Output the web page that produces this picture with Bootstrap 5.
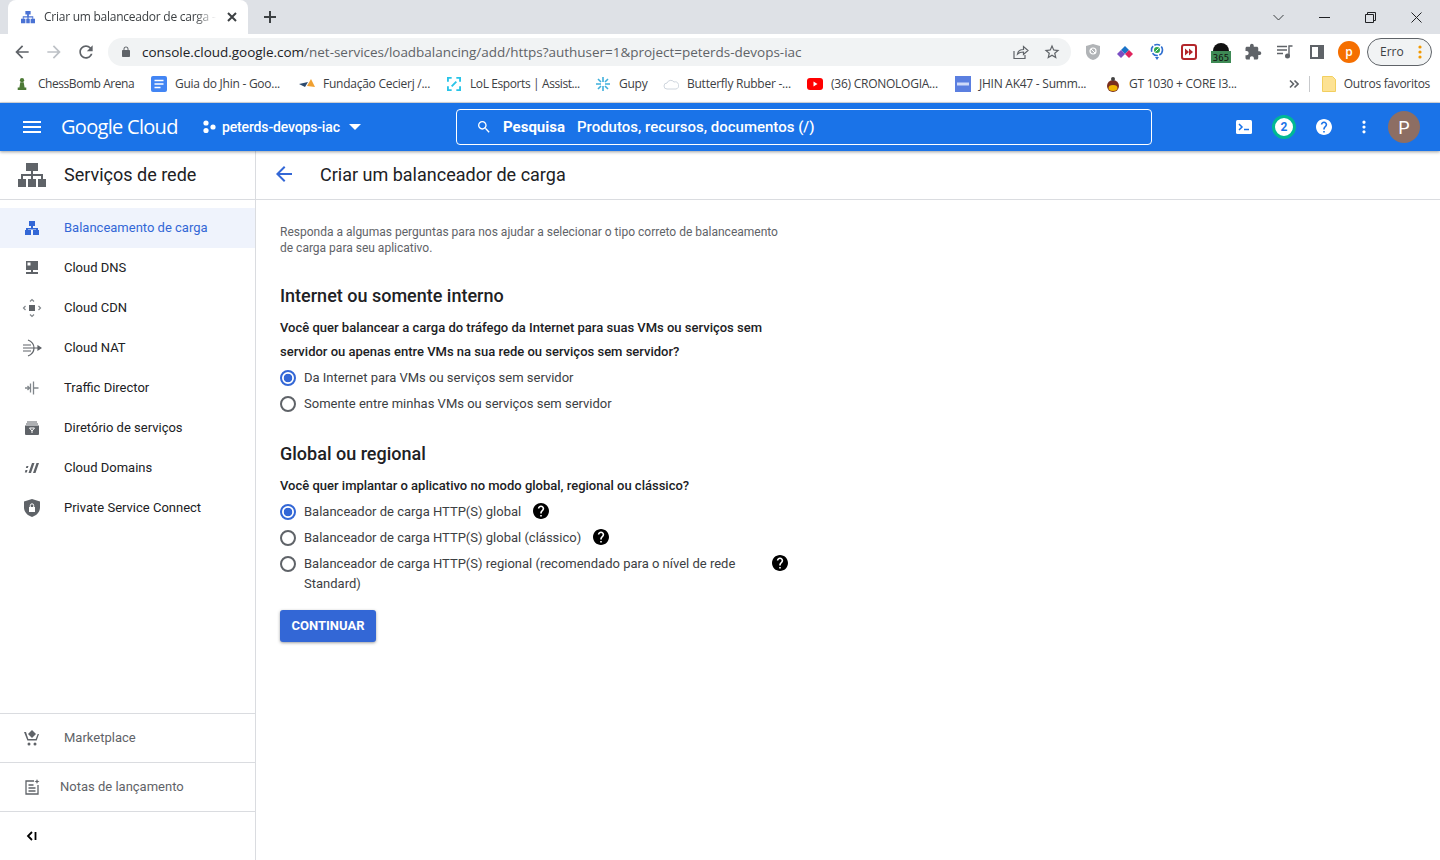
<!DOCTYPE html>
<html lang="pt-BR">
<head>
    <meta charset="UTF-8">
    <meta name="viewport" content="width=device-width, initial-scale=1.0">
    <title>Criar um balanceador de carga</title>
    <link href="https://cdn.jsdelivr.net/npm/bootstrap@5.3.0/dist/css/bootstrap.min.css" rel="stylesheet">
    <style>
        html, body { height: 100%; }
        body { overflow: hidden; font-family: Roboto, sans-serif; color: #202124; background: #fff; display: flex; flex-direction: column; }

        /* Browser chrome */
        .chrome-text { font-family: "Open Sans", sans-serif; }
        .tabstrip { height: 34px; background: #dee1e6; padding-left: 8px; flex: none; }
        .tab-item { width: 240px; height: 34px; background: #fff; border-radius: 8px 8px 0 0; padding: 0 10px 0 13px; font-size: 12px; color: #3c4043; }
        .tab-title { width: 172px; margin-left: 9px; white-space: nowrap; letter-spacing: -.25px; -webkit-mask-image: linear-gradient(to right, #000 88%, transparent); mask-image: linear-gradient(to right, #000 88%, transparent); }
        .new-tab { margin-left: 14px; }
        .win-btns { margin-left: auto; padding-right: 18px; gap: 35px; }
        .toolbar { height: 34px; padding: 4px 8px 0 12px; flex: none; }
        .nav-btns { gap: 12px; width: 96px; flex: none; }
        .omnibox { width: 963px; height: 28px; background: #f1f3f4; border-radius: 14px; padding: 0 10px 0 12px; font-size: 13.5px; color: #5f6368; flex: none; }
        .omnibox b { font-weight: 400; color: #202124; }
        .url-text { margin-left: 10px; white-space: nowrap; letter-spacing: -.02px; }
        .omni-right { margin-left: auto; gap: 14px; }
        .ext-row { width: 280px; margin-left: 10px; padding-left: 2px; gap: 12px; flex: none; }
        .ext-row > * { flex: none; }
        .ext-slot { width: 20px; height: 20px; display: flex; align-items: center; justify-content: center; }
        .profile-dot { width: 22px; height: 22px; margin-left: -1px; border-radius: 50%; background: #f56f00; color: #fff; font-size: 12px; font-weight: 600; }
        .erro-pill { width: 65px; height: 28px; margin-left: -5px; border: 1px solid #5f6368; border-radius: 14px; background: #f1f3f4; font-size: 12px; padding: 0 9px 0 12px; color: #3c4043; }
        .bookmarks { height: 35px; padding: 0 0 2px 16px; font-size: 12px; letter-spacing: -.25px; color: #3c4043; border-bottom: 1px solid #dadce0; flex: none; display: grid; grid-template-columns: 135px 148px 148px 148px 68px 144px 148px 150px 146px 1fr; align-items: center; }
        .bm-item { display: flex; align-items: center; gap: 8px; white-space: nowrap; overflow: hidden; }
        .bm-item svg { flex: none; }
        .bm-chess { gap: 10px; letter-spacing: -.45px; }
        .bm-lol { gap: 9px; letter-spacing: -.4px; }
        .bm-end { display: flex; align-items: center; justify-content: flex-end; padding-right: 10px; white-space: nowrap; letter-spacing: -.3px; }
        .bm-sep { width: 1px; height: 16px; background: #c7c9cc; margin: 0 12px 0 10px; }

        /* Cloud console top bar */
        .gc-bar { height: 48px; background: #1a73e8; color: #fff; padding-left: 20px; flex: none; position: relative; z-index: 2; box-shadow: 0 1px 3px rgba(60,64,67,.5); }
        .gc-logo { font-family: "Open Sans", sans-serif; font-size: 20px; letter-spacing: -.7px; margin-left: 17px; width: 141px; flex: none; }
        .gc-project { font-size: 14px; font-weight: 500; letter-spacing: -.15px; width: 254px; flex: none; gap: 6px; }
        .gc-project .caret-ico { margin-left: 3px; }
        .gc-search { width: 696px; height: 36px; border: 1px solid #fff; border-radius: 4px; padding-left: 19px; font-size: 15px; font-weight: 500; flex: none; }
        .gc-search strong { font-weight: 700; margin: 0 12px 0 11px; }
        .gc-actions { margin-left: 84px; gap: 24px; }
        .notif-ring { width: 24px; height: 24px; border-radius: 50%; background: #fff; border: 3px solid #00b894; color: #1a73e8; font-size: 12px; font-weight: 700; margin: 0 -4px; }
        .user-dot { width: 32px; height: 32px; border-radius: 50%; background: #8d6e63; font-size: 18px; margin-left: -8px; }

        /* Page */
        .page-body { flex: 1; min-height: 0; }
        .side-col { width: 256px; flex: none; border-right: 1px solid #dadce0; }
        .side-head { height: 49px; padding: 0 0 1px 18px; font-size: 18px; border-bottom: 1px solid #dadce0; flex: none; }
        .side-head span { margin-left: 18px; }
        .side-list { padding-top: 8px; flex: 1; }
        .side-link { height: 40px; padding-left: 24px; font-size: 13px; color: #202124; text-decoration: none; }
        .side-link span { margin-left: 24px; }
        .side-link .wide-ico { margin: 0 -2px; }
        .side-link.is-current { background: #eff3fc; color: #3367d6; }
        .side-foot { height: 49px; padding-left: 24px; border-top: 1px solid #dadce0; font-size: 13px; color: #5f6368; flex: none; }
        .side-foot .foot-market { margin-left: 24px; }
        .side-foot .foot-notes { margin-left: 20px; }
        .main-col { flex: 1; min-width: 0; }
        .main-head { height: 49px; padding: 0 0 2px 20px; border-bottom: 1px solid #dadce0; font-size: 18px; }
        .main-head span { margin-left: 28px; }
        .main-form { width: 510px; margin-left: 24px; padding-top: 24px; }
        .intro-text { font-size: 12px; line-height: 16px; color: #5f6368; margin: 0; }
        .sect-title { font-size: 18px; line-height: 24px; font-weight: 500; margin: 0; }
        .sect-one { margin-top: 28px; }
        .sect-two { margin-top: 25px; }
        .ask-text { font-size: 13px; line-height: 24px; font-weight: 500; margin: 8px 0 1px; }
        .radio-row { min-height: 26px; padding: 3px 0 3px; margin: 0; font-size: 13px; line-height: 20px; display: flex; align-items: flex-start; color: #3c4043; }
        .radio-row .form-check-input { width: 16px; height: 16px; margin: 2px 8px 0 0; float: none; flex: none; border: 2px solid #5f6368; background-color: #fff; background-image: none; box-shadow: none; }
        .radio-row .form-check-input:checked { border-color: #3367d6; background-color: #fff; background-image: radial-gradient(circle, #3367d6 0 4px, transparent 4.6px); }
        .radio-row .form-check-label { opacity: 1; }
        .help-mark { margin-left: 12px; margin-top: 1px; flex: none; }
        .help-wide { margin-left: 0; }
        .label-wide { width: 468px; flex: none; }
        .go-btn { background: #3367d6; color: #fff; border: 0; border-radius: 3px; height: 32px; width: 96px; padding: 0; margin-top: 13px; font-size: 13px; font-weight: 700; box-shadow: 0 1px 3px rgba(60,64,67,.5); }
        .go-btn:hover { background: #2b5cc4; color: #fff; }
    </style>
</head>
<body>
    <div class="tabstrip d-flex align-items-end chrome-text">
        <div class="tab-item d-flex align-items-center">
            <svg width="14" height="14" viewBox="0 0 16 16" fill="#4a72d4"><path d="M5 1h6v4H9v2h5v3h2v5h-5v-5h2V8.500H8.700V10H10v5H6v-5h1.300V8.500H3V10h2v5H0v-5h2V7h5V5H5z"/></svg>
            <div class="tab-title">Criar um balanceador de carga –</div>
            <svg width="12" height="12" viewBox="0 0 12 12" stroke="#3c4043" stroke-width="2" class="ms-auto"><path d="M2 2l8 8M10 2l-8 8"/></svg>
        </div>
        <svg class="new-tab align-self-center" width="16" height="16" viewBox="0 0 16 16" stroke="#3c4043" stroke-width="2"><path d="M8 2v12M2 8h12"/></svg>
        <div class="win-btns d-flex align-items-center align-self-center">
            <svg width="11" height="11" viewBox="0 0 11 11" fill="none" stroke="#3c4043"><path d="M.5 3l5 5 5-5"/></svg>
            <svg width="11" height="11" viewBox="0 0 11 11" stroke="#202124"><path d="M0 5.500h11"/></svg>
            <svg width="11" height="11" viewBox="0 0 11 11" fill="none" stroke="#202124"><path d="M.5 2.500h8v8h-8zM2.500 2.500v-2h8v8h-2"/></svg>
            <svg width="11" height="11" viewBox="0 0 11 11" stroke="#202124"><path d="M.5.5l10 10M10.500.5l-10 10"/></svg>
        </div>
    </div>

    <div class="toolbar d-flex align-items-start chrome-text">
        <div class="nav-btns d-flex align-items-center mt-1">
            <svg width="20" height="20" viewBox="0 0 24 24" fill="#5f6368"><path d="M20 11H7.830l5.590-5.590L12 4l-8 8 8 8 1.410-1.410L7.830 13H20v-2z"/></svg>
            <svg width="20" height="20" viewBox="0 0 24 24" fill="#bdc1c6"><path d="M12 4l-1.410 1.410L16.170 11H4v2h12.170l-5.580 5.590L12 20l8-8z"/></svg>
            <svg width="20" height="20" viewBox="0 0 24 24" fill="#5f6368"><path d="M17.650 6.350C16.200 4.900 14.210 4 12 4c-4.420 0-7.990 3.580-7.990 8s3.570 8 7.990 8c3.730 0 6.840-2.550 7.730-6h-2.080c-.82 2.330-3.040 4-5.650 4-3.310 0-6-2.690-6-6s2.690-6 6-6c1.660 0 3.140.69 4.220 1.780L13 11h7V4l-2.350 2.350z"/></svg>
        </div>
        <div class="omnibox d-flex align-items-center">
            <svg width="12" height="12" viewBox="0 0 24 24" fill="#5f6368"><path d="M18 8h-1V6c0-2.760-2.240-5-5-5S7 3.240 7 6v2H6c-1.100 0-2 .9-2 2v10c0 1.100.9 2 2 2h12c1.100 0 2-.9 2-2V10c0-1.100-.9-2-2-2zM8.900 8V6c0-1.710 1.390-3.100 3.100-3.100 1.710 0 3.100 1.390 3.100 3.100v2z"/></svg>
            <div class="url-text"><b>console.cloud.google.com</b>/net-services/loadbalancing/add/https?authuser=1&amp;project=peterds-devops-iac</div>
            <div class="omni-right d-flex align-items-center">
                <svg width="18" height="18" viewBox="0 0 18 18" fill="none" stroke="#5f6368" stroke-width="1.200"><path d="M3 8v7.500h11V12M6.500 11c.5-3 3-4.500 6-4.500V3.500L17 7.500l-4.500 4V9c-2.500 0-4.500.5-6 2z"/></svg>
                <svg width="18" height="18" viewBox="0 0 24 24" fill="#5f6368"><path d="M22 9.240l-7.190-.62L12 2 9.190 8.630 2 9.240l5.460 4.730L5.820 21 12 17.270 18.180 21l-1.630-7.030L22 9.240zM12 15.400l-3.760 2.270 1-4.280-3.320-2.880 4.380-.38L12 6.100l1.710 4.040 4.380.38-3.320 2.880 1 4.280L12 15.400z"/></svg>
            </div>
        </div>
        <div class="ext-row d-flex align-items-center mt-0">
            <span class="ext-slot"><svg width="16" height="18" viewBox="0 0 16 18"><path d="M8 1l7 2v6c0 4-3 7-7 8-4-1-7-4-7-8V3z" fill="#b1b4b7"/><circle cx="8" cy="8" r="3" fill="none" stroke="#fff" stroke-width="1.200"/><path d="M6 6l4 4" stroke="#fff"/></svg></span>
            <span class="ext-slot"><svg width="16" height="12" viewBox="0 0 16 12"><path d="M8 0l4 4-4 4-4-4z" fill="#1a73c8"/><path d="M4 4l4 4-4 4-4-4z" fill="#7b4fc4"/><path d="M12 4l4 4-4 4-4-4z" fill="#e0245e"/></svg></span>
            <span class="ext-slot"><svg width="16" height="18" viewBox="0 0 16 18"><circle cx="8" cy="7" r="5.500" fill="none" stroke="#2f6fd0" stroke-width="1.600" stroke-dasharray="6 1.500"/><circle cx="8" cy="7" r="3" fill="#2fa84f"/><path d="M6.500 8.500l3-3" stroke="#fff"/><path d="M6 14l2 3 2-3z" fill="#2f6fd0"/></svg></span>
            <span class="ext-slot"><svg width="16" height="16" viewBox="0 0 16 16"><rect x="1" y="1" width="14" height="14" rx="2" fill="#fff" stroke="#b3262b" stroke-width="2"/><path d="M4 4.500l4 3.500-4 3.500zM8 4.500l4 3.500-4 3.500z" fill="#b3262b"/></svg></span>
            <span class="ext-slot"><svg width="20" height="22" viewBox="0 0 20 22"><path d="M2 10a8 8 0 0 1 16 0z" fill="#111"/><rect y="10" width="20" height="12" fill="#3e8a55"/><text x="10" y="19.500" font-size="9" text-anchor="middle" fill="#111" font-family="DejaVu Sans Mono, monospace">365</text></svg></span>
            <span class="ext-slot"><svg width="18" height="18" viewBox="0 0 24 24" fill="#5f6368"><path d="M20.500 11H19V7c0-1.100-.9-2-2-2h-4V3.500C13 2.120 11.880 1 10.500 1S8 2.120 8 3.500V5H4c-1.100 0-1.990.9-1.990 2v3.800H3.500c1.490 0 2.700 1.210 2.700 2.700s-1.210 2.700-2.700 2.700H2V20c0 1.100.9 2 2 2h3.800v-1.500c0-1.490 1.210-2.700 2.700-2.700 1.490 0 2.700 1.210 2.700 2.700V22H17c1.100 0 2-.9 2-2v-4h1.500c1.380 0 2.500-1.120 2.500-2.500S21.880 11 20.500 11z"/></svg></span>
            <span class="ext-slot"><svg width="16" height="14" viewBox="0 0 16 14" fill="none" stroke="#5f6368" stroke-width="1.400"><path d="M0 1.500h10M0 5h10M0 8.500h6M12 11V1h3.500"/><circle cx="10.500" cy="11" r="1.800" fill="#5f6368"/></svg></span>
            <span class="ext-slot"><svg width="14" height="14" viewBox="0 0 14 14"><rect x="1" y="1" width="12" height="12" fill="none" stroke="#5f6368" stroke-width="2"/><rect x="8" y="1" width="5" height="12" fill="#5f6368"/></svg></span>
            <span class="profile-dot d-flex align-items-center justify-content-center">p</span>
            <span class="erro-pill d-flex align-items-center justify-content-between">Erro <svg width="4" height="14" viewBox="0 0 4 14" fill="#f29900"><circle cx="2" cy="2" r="1.600"/><circle cx="2" cy="7" r="1.600"/><circle cx="2" cy="12" r="1.600"/></svg></span>
        </div>
    </div>

    <div class="bookmarks chrome-text">
        <div class="bm-item bm-chess"><svg width="12" height="16" viewBox="0 0 14 16" fill="#4d7a36"><circle cx="7" cy="3.500" r="2.500"/><path d="M5 6h4l1 6h2v3H2v-3h2z"/></svg><span>ChessBomb Arena</span></div>
        <div class="bm-item"><svg width="16" height="16" viewBox="0 0 16 16"><rect x="0" width="16" height="16" rx="2" fill="#4285f4"/><path d="M3.500 4.500h9M3.500 8h9M3.500 11.500h6" stroke="#fff" stroke-width="1.400"/></svg>Guia do Jhin - Goo...</div>
        <div class="bm-item"><svg width="16" height="14" viewBox="0 0 16 14"><path d="M0 7l9-2-3 5z" fill="#2c4a6e"/><path d="M8 9l4-7 4 8z" fill="#f0a030"/></svg>Fundação Cecierj /...</div>
        <div class="bm-item bm-lol"><svg width="14" height="14" viewBox="0 0 15 15" fill="none" stroke="#29c4e8" stroke-width="2"><path d="M1 5V1h4M10 1h4v4M14 10v4h-4M5 14H1v-4M5 10l5-5"/></svg><span>LoL Esports | Assist...</span></div>
        <div class="bm-item"><svg width="16" height="16" viewBox="0 0 16 16" stroke="#3fb0dc" stroke-width="1.600"><path d="M8 1v5M8 10v5M1 8h5M10 8h5M3 3l3 3M10 10l3 3M13 3l-3 3M6 10l-3 3"/></svg>Gupy</div>
        <div class="bm-item"><svg width="16" height="12" viewBox="0 0 16 12" fill="none" stroke="#cfd6de"><path d="M4 11a3 3 0 0 1 0-6 4 4 0 0 1 7-1 3.500 3.500 0 0 1 2 7z"/></svg>Butterfly Rubber -...</div>
        <div class="bm-item"><svg width="16" height="12" viewBox="0 0 16 12"><rect width="16" height="12" rx="3" fill="#f00"/><path d="M6.500 3.500l4 2.500-4 2.500z" fill="#fff"/></svg>(36) CRONOLOGIA...</div>
        <div class="bm-item"><svg width="16" height="16" viewBox="0 0 16 16"><rect width="16" height="16" fill="#5b7fe0"/><rect x="2" y="6.500" width="12" height="3" fill="#cfdaf8"/></svg>JHIN AK47 - Summ...</div>
        <div class="bm-item"><svg width="16" height="16" viewBox="0 0 16 16"><circle cx="8" cy="10" r="6" fill="#7a2e1e"/><ellipse cx="8" cy="12" rx="4.500" ry="3" fill="#f0b400"/><circle cx="8" cy="3" r="2" fill="#444"/></svg>GT 1030 + CORE I3...</div>
        <div class="bm-end">
            <svg width="10" height="10" viewBox="0 0 10 10" fill="none" stroke="#5f6368" stroke-width="1.600"><path d="M1 1.500l3.500 3.500L1 8.500M5.500 1.500L9 5 5.500 8.500"/></svg>
            <span class="bm-sep"></span>
            <svg class="me-2" width="14" height="16" viewBox="0 0 14 16"><path d="M.5.500h10l3 3v12H.5z" fill="#fde293" stroke="#f2cf5f"/></svg>
            Outros favoritos
        </div>
    </div>

    <header class="gc-bar d-flex align-items-center">
        <svg width="24" height="24" viewBox="0 0 24 24" fill="#fff"><path d="M3 18h18v-2H3v2zm0-5h18v-2H3v2zm0-7v2h18V6H3z"/></svg>
        <div class="gc-logo">Google Cloud</div>
        <div class="gc-project d-flex align-items-center">
            <svg width="14" height="14" viewBox="0 0 14 14" fill="#fff"><circle cx="4" cy="3" r="2.600"/><circle cx="4" cy="10.500" r="2.600"/><circle cx="11" cy="7" r="2.600"/></svg>
            peterds-devops-iac
            <svg class="caret-ico" width="12" height="6" viewBox="0 0 12 6" fill="#fff"><path d="M0 0h12L6 6z"/></svg>
        </div>
        <div class="gc-search d-flex align-items-center">
            <svg width="16" height="16" viewBox="0 0 24 24" fill="#fff"><path d="M15.500 14h-.79l-.28-.27C15.410 12.590 16 11.110 16 9.500 16 5.910 13.090 3 9.500 3S3 5.910 3 9.500 5.910 16 9.500 16c1.610 0 3.090-.59 4.230-1.570l.27.28v.79l5 4.990L20.490 19l-4.990-5zm-6 0C7.010 14 5 11.990 5 9.500S7.010 5 9.500 5 14 7.010 14 9.500 11.990 14 9.500 14z"/></svg>
            <strong>Pesquisa</strong>Produtos, recursos, documentos (/)
        </div>
        <div class="gc-actions d-flex align-items-center">
            <svg width="16" height="16" viewBox="0 0 16 16"><rect width="16" height="14" y="1" rx="1.500" fill="#fff"/><path d="M3 5l3 3-3 3" fill="none" stroke="#1a73e8" stroke-width="1.500"/><path d="M8 10.500h5" stroke="#1a73e8" stroke-width="1.500"/></svg>
            <div class="notif-ring d-flex align-items-center justify-content-center">2</div>
            <svg width="16" height="16" viewBox="2 2 20 20" fill="#fff"><path d="M12 2C6.480 2 2 6.480 2 12s4.480 10 10 10 10-4.480 10-10S17.520 2 12 2zm1 17h-2v-2h2v2zm2.070-7.750l-.9.92C13.450 12.900 13 13.500 13 15h-2v-.5c0-1.100.45-2.100 1.170-2.830l1.240-1.260c.37-.36.59-.86.59-1.410 0-1.100-.9-2-2-2s-2 .9-2 2H8c0-2.210 1.790-4 4-4s4 1.790 4 4c0 .88-.36 1.680-.93 2.250z"/></svg>
            <svg width="16" height="16" viewBox="4 2 16 20" fill="#fff"><path d="M12 8c1.100 0 2-.9 2-2s-.9-2-2-2-2 .9-2 2 .9 2 2 2zm0 2c-1.100 0-2 .9-2 2s.9 2 2 2 2-.9 2-2-.9-2-2-2zm0 6c-1.100 0-2 .9-2 2s.9 2 2 2 2-.9 2-2-.9-2-2-2z"/></svg>
            <div class="user-dot d-flex align-items-center justify-content-center">P</div>
        </div>
    </header>

    <div class="page-body d-flex">
        <nav class="side-col d-flex flex-column">
            <div class="side-head d-flex align-items-center">
                <svg width="28" height="24" viewBox="0 0 28 24" fill="#5f6368"><path d="M8 0h12v8h-5v3h10v5h3v8h-8v-8h3v-3H15v3h3v8h-8v-8h3v-3H5v3h3v8H0v-8h3v-5h10V8H8z"/></svg>
                <span>Serviços de rede</span>
            </div>
            <div class="side-list">
                <a class="side-link is-current d-flex align-items-center" href="#">
                    <svg width="16" height="16" viewBox="0 0 16 16" fill="#3367d6"><path d="M5 1h6v5H9v2h5v2h1v5H9v-5h3V9.500H4V10h3v5H1v-5h1V8h5V6H5z"/></svg>
                    <span>Balanceamento de carga</span>
                </a>
                <a class="side-link d-flex align-items-center" href="#">
                    <svg width="16" height="16" viewBox="0 0 16 16" fill="#5f6368"><path d="M2 1h12v9H9v2h5v2H2v-2h5v-2H2z"/><rect x="3.500" y="2.500" width="3" height="3" fill="#fff"/></svg>
                    <span>Cloud DNS</span>
                </a>
                <a class="side-link d-flex align-items-center" href="#">
                    <svg class="wide-ico" width="20" height="20" viewBox="0 0 20 20" fill="none" stroke="#80868b" stroke-width="1.200"><rect x="7" y="7" width="6" height="6" fill="#5f6368" stroke="none"/><path d="M8 3.500L10 1.500l2 2M8 16.500l2 2 2-2M3.500 8l-2 2 2 2M16.500 8l2 2-2 2"/></svg>
                    <span>Cloud CDN</span>
                </a>
                <a class="side-link d-flex align-items-center" href="#">
                    <svg class="wide-ico" width="20" height="20" viewBox="0 0 20 20" fill="none" stroke="#5f6368" stroke-width="1.200"><path d="M6 2c5 2 6 5 6 8s-1 6-6 8M1 7h8M1 13h8M1 10h11M12 10h6"/><path d="M16 8l3 2-3 2z" fill="#5f6368"/></svg>
                    <span>Cloud NAT</span>
                </a>
                <a class="side-link d-flex align-items-center" href="#">
                    <svg width="16" height="16" viewBox="0 0 16 16" fill="none" stroke="#80868b" stroke-width="1.300"><path d="M1 8h4M3.500 6l2 2-2 2M6.500 3.500v9M9.500 1.500v13M9.500 8h5"/></svg>
                    <span>Traffic Director</span>
                </a>
                <a class="side-link d-flex align-items-center" href="#">
                    <svg width="16" height="16" viewBox="0 0 16 16"><path d="M3 1.500h10v1H3zM2 3.500h12v1H2z" fill="#5f6368"/><path d="M1 5.500h14V14a1 1 0 0 1-1 1H2a1 1 0 0 1-1-1z" fill="#5f6368"/><path d="M5.500 8h5L8 11zM8 11v2" stroke="#fff" fill="none"/></svg>
                    <span>Diretório de serviços</span>
                </a>
                <a class="side-link d-flex align-items-center" href="#">
                    <svg width="16" height="16" viewBox="0 0 16 16" fill="#5f6368"><path d="M8 3h2.500L7 13H4.500zM12.500 3H15l-3.500 10H9zM2.500 6h2l-.7 2h-2zM1.500 10h2l-.7 2.500h-2z"/></svg>
                    <span>Cloud Domains</span>
                </a>
                <a class="side-link d-flex align-items-center" href="#">
                    <svg width="16" height="18" viewBox="0 0 16 18"><path d="M8 0l8 2.500v6c0 4.500-3.400 8-8 9.500-4.600-1.500-8-5-8-9.500v-6z" fill="#5f6368"/><rect x="5" y="8" width="6" height="5" fill="#fff"/><path d="M6.300 8V6.500a1.700 1.700 0 0 1 3.400 0V8" fill="none" stroke="#fff"/></svg>
                    <span>Private Service Connect</span>
                </a>
            </div>
            <div class="side-foot d-flex align-items-center">
                <svg width="16" height="16" viewBox="0 0 16 16" fill="#5f6368"><path d="M8 0l4 4-4 4-4-4zM0 2h2l2.300 7h7.400l2-5H15l-2.300 6.500H3.400z"/><circle cx="5" cy="14" r="1.500"/><circle cx="11" cy="14" r="1.500"/></svg>
                <span class="foot-market">Marketplace</span>
            </div>
            <div class="side-foot d-flex align-items-center">
                <svg width="16" height="16" viewBox="0 0 16 16" fill="none" stroke="#5f6368" stroke-width="1.300"><path d="M10 2H2v13h12V6M4.500 6h5M4.500 9h7M4.500 12h7"/><path d="M13 0l.7 1.800 1.800.7-1.800.7-.7 1.800-.7-1.800-1.800-.7 1.800-.7z" fill="#5f6368" stroke="none"/></svg>
                <span class="foot-notes">Notas de lançamento</span>
            </div>
            <div class="side-foot d-flex align-items-center">
                <svg width="16" height="16" viewBox="0 0 16 16" fill="none" stroke="#000" stroke-width="1.800"><path d="M8 4L4 8l4 4M11.500 4v8"/></svg>
            </div>
        </nav>

        <main class="main-col">
            <div class="main-head d-flex align-items-center">
                <svg width="16" height="16" viewBox="4 4 16 16" fill="#3367d6"><path d="M20 11H7.830l5.590-5.590L12 4l-8 8 8 8 1.410-1.410L7.830 13H20v-2z"/></svg>
                <span>Criar um balanceador de carga</span>
            </div>
            <form class="main-form">
                <p class="intro-text">Responda a algumas perguntas para nos ajudar a selecionar o tipo correto de balanceamento de carga para seu aplicativo.</p>

                <h2 class="sect-title sect-one">Internet ou somente interno</h2>
                <p class="ask-text">Você quer balancear a carga do tráfego da Internet para suas VMs ou serviços sem servidor ou apenas entre VMs na sua rede ou serviços sem servidor?</p>
                <div class="form-check radio-row">
                    <input class="form-check-input" type="radio" name="origem" id="orig1" checked>
                    <label class="form-check-label" for="orig1">Da Internet para VMs ou serviços sem servidor</label>
                </div>
                <div class="form-check radio-row">
                    <input class="form-check-input" type="radio" name="origem" id="orig2">
                    <label class="form-check-label" for="orig2">Somente entre minhas VMs ou serviços sem servidor</label>
                </div>

                <h2 class="sect-title sect-two">Global ou regional</h2>
                <p class="ask-text">Você quer implantar o aplicativo no modo global, regional ou clássico?</p>
                <div class="form-check radio-row">
                    <input class="form-check-input" type="radio" name="modo" id="modo1" checked>
                    <label class="form-check-label" for="modo1">Balanceador de carga HTTP(S) global</label>
                    <svg class="help-mark" width="16" height="16" viewBox="2 2 20 20"><path d="M12 2C6.480 2 2 6.480 2 12s4.480 10 10 10 10-4.480 10-10S17.520 2 12 2zm1 17h-2v-2h2v2zm2.070-7.750l-.9.92C13.450 12.900 13 13.500 13 15h-2v-.5c0-1.100.45-2.100 1.170-2.830l1.240-1.260c.37-.36.59-.86.59-1.410 0-1.100-.9-2-2-2s-2 .9-2 2H8c0-2.210 1.790-4 4-4s4 1.790 4 4c0 .88-.36 1.680-.93 2.250z"/></svg>
                </div>
                <div class="form-check radio-row">
                    <input class="form-check-input" type="radio" name="modo" id="modo2">
                    <label class="form-check-label" for="modo2">Balanceador de carga HTTP(S) global (clássico)</label>
                    <svg class="help-mark" width="16" height="16" viewBox="2 2 20 20"><path d="M12 2C6.480 2 2 6.480 2 12s4.480 10 10 10 10-4.480 10-10S17.520 2 12 2zm1 17h-2v-2h2v2zm2.070-7.750l-.9.92C13.450 12.900 13 13.500 13 15h-2v-.5c0-1.100.45-2.100 1.170-2.830l1.240-1.260c.37-.36.59-.86.59-1.410 0-1.100-.9-2-2-2s-2 .9-2 2H8c0-2.210 1.790-4 4-4s4 1.790 4 4c0 .88-.36 1.680-.93 2.250z"/></svg>
                </div>
                <div class="form-check radio-row">
                    <input class="form-check-input" type="radio" name="modo" id="modo3">
                    <label class="form-check-label label-wide" for="modo3">Balanceador de carga HTTP(S) regional (recomendado para o nível de rede Standard)</label>
                    <svg class="help-mark help-wide" width="16" height="16" viewBox="2 2 20 20"><path d="M12 2C6.480 2 2 6.480 2 12s4.480 10 10 10 10-4.480 10-10S17.520 2 12 2zm1 17h-2v-2h2v2zm2.070-7.750l-.9.92C13.450 12.900 13 13.500 13 15h-2v-.5c0-1.100.45-2.100 1.170-2.830l1.240-1.260c.37-.36.59-.86.59-1.410 0-1.100-.9-2-2-2s-2 .9-2 2H8c0-2.210 1.790-4 4-4s4 1.790 4 4c0 .88-.36 1.680-.93 2.250z"/></svg>
                </div>
                <button type="button" class="btn go-btn">CONTINUAR</button>
            </form>
        </main>
    </div>

    <script src="https://cdn.jsdelivr.net/npm/bootstrap@5.3.0/dist/js/bootstrap.bundle.min.js"></script>
</body>
</html>
